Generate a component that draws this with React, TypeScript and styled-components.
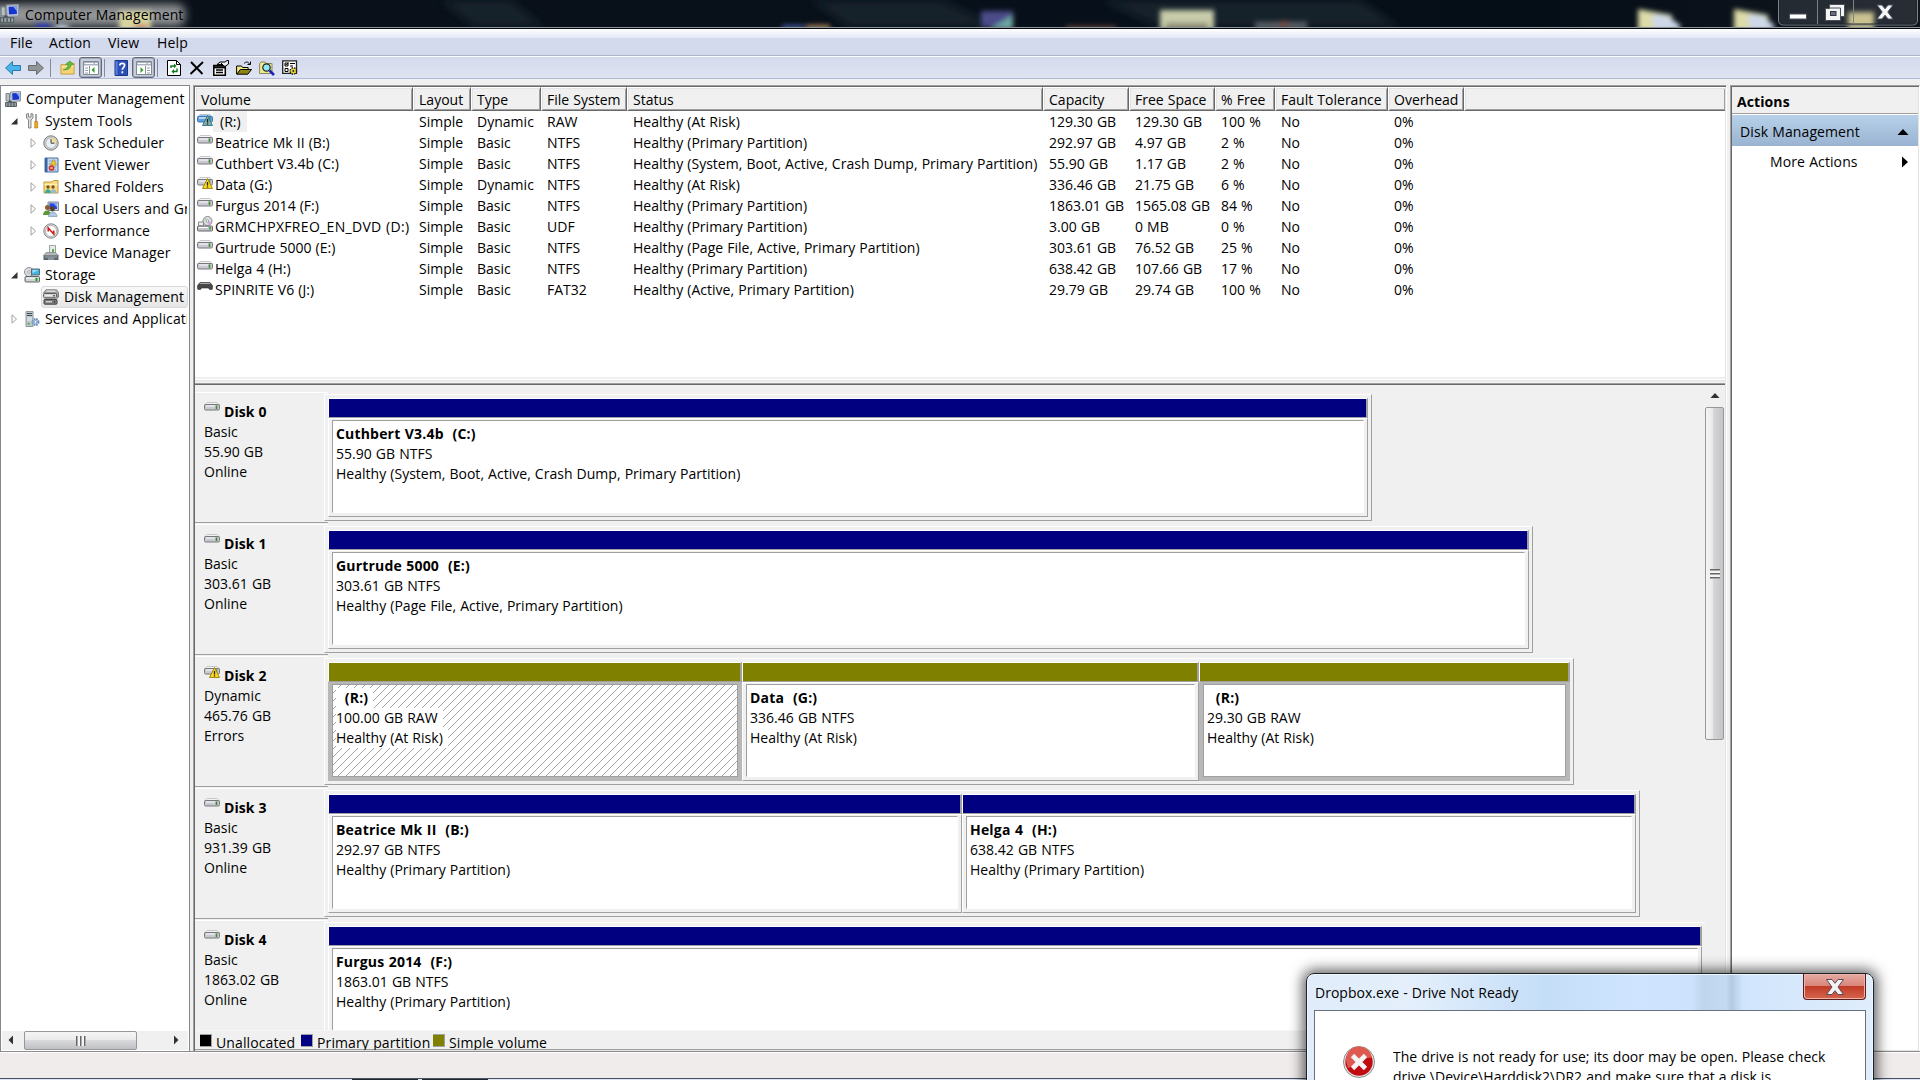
import styled, { createGlobalStyle, css } from 'styled-components';

type TTone = 'primary' | 'simple';

type TPartition = {
  name: string;
  size: string;
  status: string;
  width: number;
  tone: TTone;
  risk?: boolean;
  selected?: boolean;
};

type TDisk = {
  name: string;
  kind: string;
  size: string;
  state: string;
  warn?: boolean;
  parts: TPartition[];
};

const columns = [
  { label: 'Volume', width: 218 },
  { label: 'Layout', width: 58 },
  { label: 'Type', width: 70 },
  { label: 'File System', width: 86 },
  { label: 'Status', width: 416 },
  { label: 'Capacity', width: 86 },
  { label: 'Free Space', width: 86 },
  { label: '% Free', width: 60 },
  { label: 'Fault Tolerance', width: 113 },
  { label: 'Overhead', width: 76 },
];

const volumes = [
  { icon: 'risk', cells: ['(R:)', 'Simple', 'Dynamic', 'RAW', 'Healthy (At Risk)', '129.30 GB', '129.30 GB', '100 %', 'No', '0%'] },
  { icon: 'drive', cells: ['Beatrice Mk II (B:)', 'Simple', 'Basic', 'NTFS', 'Healthy (Primary Partition)', '292.97 GB', '4.97 GB', '2 %', 'No', '0%'] },
  { icon: 'drive', cells: ['Cuthbert V3.4b (C:)', 'Simple', 'Basic', 'NTFS', 'Healthy (System, Boot, Active, Crash Dump, Primary Partition)', '55.90 GB', '1.17 GB', '2 %', 'No', '0%'] },
  { icon: 'warn', cells: ['Data (G:)', 'Simple', 'Dynamic', 'NTFS', 'Healthy (At Risk)', '336.46 GB', '21.75 GB', '6 %', 'No', '0%'] },
  { icon: 'drive', cells: ['Furgus 2014 (F:)', 'Simple', 'Basic', 'NTFS', 'Healthy (Primary Partition)', '1863.01 GB', '1565.08 GB', '84 %', 'No', '0%'] },
  { icon: 'dvd', spread: true, cells: ['GRMCHPXFREO_EN_DVD (D:)', 'Simple', 'Basic', 'UDF', 'Healthy (Primary Partition)', '3.00 GB', '0 MB', '0 %', 'No', '0%'] },
  { icon: 'drive', cells: ['Gurtrude 5000 (E:)', 'Simple', 'Basic', 'NTFS', 'Healthy (Page File, Active, Primary Partition)', '303.61 GB', '76.52 GB', '25 %', 'No', '0%'] },
  { icon: 'drive', cells: ['Helga 4 (H:)', 'Simple', 'Basic', 'NTFS', 'Healthy (Primary Partition)', '638.42 GB', '107.66 GB', '17 %', 'No', '0%'] },
  { icon: 'usb', cells: ['SPINRITE V6 (J:)', 'Simple', 'Basic', 'FAT32', 'Healthy (Active, Primary Partition)', '29.79 GB', '29.74 GB', '100 %', 'No', '0%'] },
];

const disks: TDisk[] = [
  {
    name: 'Disk 0', kind: 'Basic', size: '55.90 GB', state: 'Online',
    parts: [{ name: 'Cuthbert V3.4b  (C:)', size: '55.90 GB NTFS', status: 'Healthy (System, Boot, Active, Crash Dump, Primary Partition)', width: 1040, tone: 'primary' }],
  },
  {
    name: 'Disk 1', kind: 'Basic', size: '303.61 GB', state: 'Online',
    parts: [{ name: 'Gurtrude 5000  (E:)', size: '303.61 GB NTFS', status: 'Healthy (Page File, Active, Primary Partition)', width: 1201, tone: 'primary' }],
  },
  {
    name: 'Disk 2', kind: 'Dynamic', size: '465.76 GB', state: 'Errors', warn: true,
    parts: [
      { name: '  (R:)', size: '100.00 GB RAW', status: 'Healthy (At Risk)', width: 414, tone: 'simple', risk: true, selected: true },
      { name: 'Data  (G:)', size: '336.46 GB NTFS', status: 'Healthy (At Risk)', width: 457, tone: 'simple' },
      { name: '  (R:)', size: '29.30 GB RAW', status: 'Healthy (At Risk)', width: 371, tone: 'simple', risk: true },
    ],
  },
  {
    name: 'Disk 3', kind: 'Basic', size: '931.39 GB', state: 'Online',
    parts: [
      { name: 'Beatrice Mk II  (B:)', size: '292.97 GB NTFS', status: 'Healthy (Primary Partition)', width: 634, tone: 'primary' },
      { name: 'Helga 4  (H:)', size: '638.42 GB NTFS', status: 'Healthy (Primary Partition)', width: 674, tone: 'primary' },
    ],
  },
  {
    name: 'Disk 4', kind: 'Basic', size: '1863.02 GB', state: 'Online',
    parts: [{ name: 'Furgus 2014  (F:)', size: '1863.01 GB NTFS', status: 'Healthy (Primary Partition)', width: 1374, tone: 'primary' }],
  },
];

const tree = [
  { label: 'Computer Management', level: 0, icon: 'computer' },
  { label: 'System Tools', level: 1, icon: 'tools', open: true },
  { label: 'Task Scheduler', level: 2, icon: 'clock', open: false },
  { label: 'Event Viewer', level: 2, icon: 'events', open: false },
  { label: 'Shared Folders', level: 2, icon: 'shared', open: false },
  { label: 'Local Users and Groups', level: 2, icon: 'users', open: false },
  { label: 'Performance', level: 2, icon: 'perf', open: false },
  { label: 'Device Manager', level: 2, icon: 'device' },
  { label: 'Storage', level: 1, icon: 'storage', open: true },
  { label: 'Disk Management', level: 2, icon: 'diskmgmt', selected: true },
  { label: 'Services and Applications', level: 1, icon: 'services', open: false },
];

const Drive = ({ top = '#f4f4f6', body = '#c9c9d2', edge = '#77777c' }) => (
  <>
    <path d="M3 3.5h10l2.5 2.5H.5z" fill={top} stroke="#b4b4b8" strokeWidth=".7" />
    <rect x=".5" y="5.5" width="15" height="5.5" rx="1.3" fill={body} stroke={edge} />
    <path d="M2 7h9" stroke="#ececf4" strokeWidth="1.4" />
    <path d="M12.5 6.5v3.5" stroke="#3c8a2c" strokeWidth="1.6" />
  </>
);

const Warning = ({ fill = '#f8d820', edge = '#a58a10' }) => (
  <>
    <path d="M10.5 4.5l5 10h-10z" fill={fill} stroke={edge} strokeLinejoin="round" />
    <path d="M10.5 8v3.4M10.5 12.3v1.3" stroke="#222" strokeWidth="1.3" />
  </>
);

const glyphs: Record<string, React.ReactNode> = {
  drive: <Drive />,
  warn: (
    <>
      <Drive />
      <Warning />
    </>
  ),
  risk: (
    <>
      <Drive top="#8fc0ee" body="#5a9fdf" edge="#3c78b4" />
      <Warning fill="#7fb0a0" edge="#3d7a96" />
    </>
  ),
  usb: (
    <>
      <path d="M3 3.5h10l2.500 3v3q0 1-1 1h-2l-1-1.500h-7l-1 1.500h-2q-1 0-1-1v-3z" fill="#48484a" stroke="#2e2e30" strokeWidth=".6" />
      <path d="M3 4.500h10" stroke="#a8a8aa" />
    </>
  ),
  dvd: (
    <>
      <circle cx="10.500" cy="5" r="4.500" fill="#dcdce6" stroke="#88888e" />
      <path d="M10.500 5L7 3.500 8.500 1.500z" fill="#a6e0a0" />
      <path d="M10.500 5l3.500 1.500-2 2.500z" fill="#d8a0e0" />
      <circle cx="10.500" cy="5" r="1.200" fill="#fff" stroke="#777" strokeWidth=".6" />
      <path d="M1.500 6h5v4h-5z" fill="#eee" stroke="#888" />
      <rect x=".5" y="10" width="15" height="5" rx="1" fill="#c2c2c8" stroke="#66666a" />
      <path d="M2 11.500h9" stroke="#fff" />
      <path d="M13 11v2.500" stroke="#2f9a20" strokeWidth="1.500" />
    </>
  ),
  computer: (
    <>
      <path d="M5.500 1l10-.500V10l-9.500.500z" fill="#c8cdd8" stroke="#8c94a4" />
      <path d="M7.200 2.300l7-.300v6.500l-6.700.400z" fill="#1635cf" />
      <path d="M11 2.100l3.200-.100v4z" fill="#7fa6f6" />
      <path d="M1 2.500h3.500V10H1z" fill="#b8c0c4" stroke="#7c8488" />
      <path d="M2 12l3-3 4 4-1 1.500H3z" fill="#454f55" />
      <path d="M.5 11.500h11v4H.5z" fill="#9ba5a8" stroke="#59646a" />
      <path d="M3 12v3M6 12v3M9 12v3" stroke="#3f4a50" />
    </>
  ),
  tools: (
    <>
      <path d="M2.500 1v4L4.500 7v8h2.500V7L9 5V1L7 .5v3.500H4.500V.5z" fill="#dcdcdc" stroke="#6f6f6f" strokeWidth=".8" />
      <path d="M12 1v8" stroke="#888" strokeWidth="1.500" />
      <path d="M10.700 8.500h3v6.500h-3z" fill="#f0a820" stroke="#b0780c" strokeWidth=".6" />
    </>
  ),
  clock: (
    <>
      <circle cx="8" cy="8" r="7.200" fill="#d4d4d4" stroke="#7a7a7a" />
      <circle cx="8" cy="8" r="5.300" fill="#e4f0fa" stroke="#999" strokeWidth=".6" />
      <path d="M8 8V2.700A5.300 5.300 0 0113.300 8z" fill="#f4dc9c" />
      <path d="M8 4v4.200h3.500" fill="none" stroke="#44403c" />
    </>
  ),
  events: (
    <>
      <path d="M2 1h13v14H2z" fill="#c4d4ec" stroke="#4870a8" />
      <path d="M2 1h2.500v14H2z" fill="#3c64a4" />
      <path d="M6 4h7M6 7h7M6 10h7M6 13h7" stroke="#7c98c4" strokeWidth=".8" />
      <path d="M10.500 2.500l3 5.500h-6z" fill="#f8cc18" stroke="#a88810" strokeWidth=".6" />
      <circle cx="8.500" cy="11" r="2.800" fill="#d43020" />
      <path d="M7.500 10l2 2M9.500 10l-2 2" stroke="#fff" strokeWidth=".8" />
    </>
  ),
  shared: (
    <>
      <path d="M1 3h8l1.500-1.500H15V14H1z" fill="#f8dc84" stroke="#c09838" />
      <path d="M1.500 5.500h13" stroke="#fff0b8" />
      <circle cx="5" cy="8" r="1.700" fill="#7a5020" />
      <circle cx="10" cy="8" r="1.700" fill="#7a5020" />
      <path d="M2 14c0-5 6-5 6 0z" fill="#3cac98" />
      <path d="M7.500 14c0-5 6-5 6 0z" fill="#98b8d0" />
    </>
  ),
  users: (
    <>
      <path d="M5 1h10.500v8.500H5z" fill="#c4ccdc" stroke="#8088a0" />
      <path d="M6.500 2.300H14V8H6.500z" fill="#2448d8" />
      <path d="M10 2.300h4V6z" fill="#80a8f4" />
      <circle cx="4.500" cy="6.500" r="2.500" fill="#8c5c2c" />
      <circle cx="9.500" cy="8" r="2.400" fill="#5a3c20" />
      <path d="M0 14c0-6 8-6 8 0z" fill="#5c9838" />
      <path d="M5.500 15.500c0-6 8.500-6 8.500 0z" fill="#b0c8e0" stroke="#708cac" strokeWidth=".6" />
    </>
  ),
  perf: (
    <>
      <circle cx="8" cy="8" r="7.200" fill="#d8d8d8" stroke="#868686" />
      <circle cx="8" cy="8" r="5.500" fill="#fff" stroke="#a0a0a0" strokeWidth=".7" />
      <path d="M5.200 8.500V5l5.600 6V7.500" fill="none" stroke="#d01818" strokeWidth="1.500" />
    </>
  ),
  device: (
    <>
      <path d="M6.500.500l6-.200V8h-6z" fill="#e8ecec" stroke="#98a0a0" />
      <path d="M9 4h2v3H9z" fill="#50b040" />
      <path d="M3 7.500h9.500l3 3H.5z" fill="#b0b8bc" stroke="#70787c" strokeWidth=".6" />
      <path d="M.5 10.500h15v4.500H.5z" fill="#5c666c" />
      <path d="M2 12h12" stroke="#a8b0b4" />
      <path d="M5 15v-3h6v3" fill="#88949a" />
    </>
  ),
  storage: (
    <>
      <circle cx="5" cy="5" r="4.500" fill="#dcdce0" stroke="#909094" />
      <circle cx="5" cy="5" r="1.300" fill="#fff" stroke="#808084" strokeWidth=".6" />
      <path d="M7.500 2h8v6h-8z" fill="#46b4e0" stroke="#5a6a74" />
      <path d="M8.500 3h6l-6 3z" fill="#a0e0f8" />
      <rect x="1" y="9.500" width="14.500" height="5.500" rx="1" fill="#d0d4d4" stroke="#5f6668" />
      <path d="M2.500 11.200h8" stroke="#fff" />
      <path d="M12.500 11v3" stroke="#28a020" strokeWidth="2" />
    </>
  ),
  diskmgmt: (
    <>
      <path d="M3 .8h10.500l2 2.700V8L14 9.500V4H.7z" fill="#b4b4b4" stroke="#6c6c6c" strokeWidth=".8" />
      <path d="M3.500 2.200h9" stroke="#eee" />
      <rect x=".5" y="4.500" width="13" height="4" rx=".8" fill="#d4d4d4" stroke="#5c5c5c" />
      <path d="M2 8.500h11l1 2.500H1z" fill="#999" />
      <rect x="1" y="10.500" width="13" height="4.700" rx=".8" fill="#7c7c7c" stroke="#444" />
      <path d="M2.500 6.500h6M3 12.800h6" stroke="#f0f0f0" />
      <path d="M11 6v1.500M11.500 12v1.500" stroke="#333" strokeWidth="1.300" />
    </>
  ),
  services: (
    <>
      <path d="M2 .5h7v15H2z" fill="#bcc8cc" stroke="#8c989c" />
      <path d="M3 2.500h5M3 4.500h5" stroke="#3c4c54" />
      <path d="M3 7h5M3 9h5" stroke="#e8f0f0" />
      <circle cx="11.500" cy="11" r="3" fill="#c0d4ec" stroke="#6c90bc" strokeWidth="2" strokeDasharray="1.600 .8" />
      <circle cx="11.500" cy="11" r="1.300" fill="#fff" stroke="#6c90bc" strokeWidth=".7" />
      <path d="M4 12l1.500 1.500" stroke="#48a038" strokeWidth="1.500" />
    </>
  ),
  back: <path d="M.6 8L7.500 1.500v4h8v5h-8v4z" fill="#49b3ea" stroke="#2a78ac" strokeLinejoin="round" />,
  forward: <path d="M15.400 8L8.500 1.500v4h-8v5h8v4z" fill="#8f9496" stroke="#686c6e" strokeLinejoin="round" />,
  up: (
    <>
      <path d="M1 5h5l1.500-1.500H15V15H1z" fill="#f6d476" stroke="#c39b3c" />
      <path d="M1.500 7h13" stroke="#fdebb0" />
      <path d="M3.500 10.500C7.500 9.500 8.500 7 8.500 4.800H6L10.500 1l4 3.800H12c0 3.500-3 6.200-8.500 5.700z" fill="#5cc03c" stroke="#38882c" strokeWidth=".6" />
    </>
  ),
  paneLeft: (
    <>
      <path d="M.5 1.500h15v13H.5z" fill="#fff" stroke="#808890" />
      <path d="M1 2h14v3.500H1z" fill="#aab4c0" />
      <path d="M1.500 3.500h9M12 3.500h2.500" stroke="#fff" />
      <path d="M6.500 6v8.500" stroke="#8c949c" />
      <path d="M2 8h3M2 10.500h3M2 13h3" stroke="#98a0a8" />
      <path d="M11.500 7v6L8.500 10z" fill="#30a028" />
    </>
  ),
  paneRight: (
    <>
      <path d="M.5 1.500h15v13H.5z" fill="#fff" stroke="#808890" />
      <path d="M1 2h14v3.500H1z" fill="#aab4c0" />
      <path d="M1.500 3.500h9M12 3.500h2.500" stroke="#fff" />
      <path d="M9.500 6v8.500" stroke="#8c949c" />
      <path d="M11 8h3M11 10.500h3M11 13h3" stroke="#98a0a8" />
      <path d="M4.500 7v6l3-3z" fill="#30a028" />
    </>
  ),
  help: (
    <>
      <path d="M2 .5h12.500v15H2z" fill="#2a4fb8" stroke="#1c3684" />
      <path d="M2.500 1h2v14h-2z" fill="#5c80dc" />
      <path d="M6.800 5.500c0-3 4.800-2.800 4.800-.2 0 2-2.300 2-2.300 4.500M9.300 11.300v1.900" fill="none" stroke="#fff" strokeWidth="1.700" />
    </>
  ),
  refresh: (
    <>
      <path d="M1.500.5h9l4 4v11h-13z" fill="#fff" stroke="#000" />
      <path d="M10.500.5v4h4" fill="none" stroke="#000" />
      <path d="M5 8V6h4" fill="none" stroke="#0a7a1c" strokeWidth="1.400" />
      <path d="M8 3.500L10.500 6 8 8.300z" fill="#0a7a1c" />
      <path d="M11 8.500v3H7" fill="none" stroke="#0a7a1c" strokeWidth="1.400" />
      <path d="M8 9L5.500 11.500 8 14z" fill="#0a7a1c" />
    </>
  ),
  remove: <path d="M2 2l11.500 12M14 2L1.500 14" stroke="#000" strokeWidth="1.900" />,
  properties: (
    <>
      <path d="M.8 5.500h11.500v9.800H.8z" fill="#fff" stroke="#000" strokeWidth="1.500" />
      <path d="M1 7.300h11" stroke="#000" strokeWidth="2.200" />
      <path d="M3 10h7M3 12.500h7" stroke="#000" strokeWidth="1.300" />
      <path d="M4 4.500l3-2.500h5l2-1.500h1.500v3.500L12 6.500 9.500 5z" fill="#ececec" stroke="#000" />
      <path d="M6 4.500h4M8 3l2 2" stroke="#000" />
    </>
  ),
  open: (
    <>
      <path d="M.6 14V6h5l1 1.500h5.500v2" fill="#f4ec80" stroke="#000" />
      <path d="M.8 14.200l3.500-4.700h11.200l-3.700 4.700z" fill="#8c8618" stroke="#000" />
      <path d="M8 3.500c2-2 4-2 5.500.5M14.500 1.500v3h-3" fill="none" stroke="#000" />
    </>
  ),
  search: (
    <>
      <path d="M.6 13.500V3.500L2 2h4l1.500 1.500H13v10z" fill="#f0e890" stroke="#8a8460" />
      <circle cx="7.500" cy="7.500" r="3.700" fill="#8ee8f8" stroke="#222" strokeWidth="1.200" />
      <path d="M10.500 10.500l4.500 4.500" stroke="#1824b8" strokeWidth="2.500" />
    </>
  ),
  settings: (
    <>
      <path d="M.7.800h13.800v12.500H.7z" fill="#fff" stroke="#222" strokeWidth="1.300" />
      <path d="M3 3h3v3H3zM3 8.500h3v3H3zM8 3.500h5M8 6h3" fill="none" stroke="#000" />
      <path d="M3.500 4l1 1 2-2.500" fill="none" stroke="#000" />
      <circle cx="11.300" cy="11" r="3" fill="#e8d840" stroke="#222" strokeWidth="1.800" strokeDasharray="1.500 .9" />
      <circle cx="11.300" cy="11" r="2.500" fill="#e8d430" />
      <circle cx="11.300" cy="11" r=".9" fill="#222" />
    </>
  ),
};

const Icon = ({ name, size = 16 }: { name: string; size?: number }) => (
  <IconSvg $size={size} viewBox="0 0 16 16">
    {glyphs[name]}
  </IconSvg>
);

const Backdrop = () => (
  <BackdropSvg viewBox="0 0 1920 27" preserveAspectRatio="none">
    <defs>
      <filter id="soft" x="-20%" y="-20%" width="140%" height="140%">
        <feGaussianBlur stdDeviation="2.5" />
      </filter>
      <filter id="glow" x="-20%" y="-60%" width="140%" height="220%">
        <feGaussianBlur stdDeviation="5" />
      </filter>
    </defs>
    <path d="M440 0h70l35 27h-70zM810 0h130l60 27H850zM1100 0h260l40 27h-240z" fill="#18212b" filter="url(#glow)" />
    <rect x="-10" y="4" width="195" height="22" rx="8" fill="#a2a4a6" opacity=".9" filter="url(#glow)" />
    <g filter="url(#soft)">
      <ellipse cx="43" cy="27" rx="9" ry="3" fill="#2638c8" />
      <ellipse cx="62" cy="28" rx="8" ry="3" fill="#d8e4f4" />
      <rect x="119" y="11" width="32" height="20" fill="#d8d4a0" />
      <ellipse cx="141" cy="27" rx="7" ry="2" fill="#c04838" />
      <rect x="782" y="25" width="22" height="5" fill="#3c58a0" />
      <rect x="806" y="25" width="24" height="5" fill="#b08858" />
      <rect x="981" y="11" width="32" height="16" fill="#4c4c88" />
      <path d="M990 29l23-14v14z" fill="#70a8a4" />
      <rect x="1066" y="26" width="50" height="4" fill="#6a4638" />
      <rect x="1160" y="10" width="54" height="20" fill="#c8ccaa" />
      <rect x="1166" y="23" width="42" height="6" fill="#8a8870" />
      <rect x="1255" y="22" width="52" height="7" fill="#5c6068" />
      <rect x="1280" y="21" width="8" height="7" fill="#7a4c40" />
      <path d="M1638 9l34 6v16h-34z" fill="#dcdca8" />
      <path d="M1652 15h14l14 10v5h-26z" fill="#ccd8e8" />
      <path d="M1734 9l34 6v16h-34z" fill="#dcdca8" />
      <path d="M1748 15h14l12 10v5h-24z" fill="#ccd8e8" />
      <rect x="1848" y="12" width="26" height="18" fill="#c4bc84" />
    </g>
  </BackdropSvg>
);

const Caption = () => (
  <CaptionSvg viewBox="0 0 140 26">
    <path d="M.5 0v20q0 5 5 5h129q5 0 5-5V0" fill="rgba(255,255,255,.1)" stroke="#7b8288" />
    <path d="M1.500 0v19q0 5 5 5h127q5 0 5-5V0" fill="none" stroke="#20262c" />
    <path d="M39.500 0v24M75.500 0v24" stroke="#7b8288" />
    <rect x="11.500" y="14" width="17" height="5" fill="#fff" stroke="#4a4f5c" />
    <path d="M51.500 4.500h15v12h-4v4h-15v-12h4z" fill="#f4f4f4" stroke="#4a4f5c" />
    <path d="M51.500 8h11v9" fill="none" stroke="#4a4f5c" />
    <rect x="52.500" y="11.500" width="5.500" height="4" fill="#66707c" stroke="#333944" />
    <path d="M99 5h5l3 3.800L110 5h5l-5.200 7 5.200 7h-5l-3-3.800L104 19h-5l5.200-7z" fill="#f6f6f6" stroke="#4a4f5c" />
  </CaptionSvg>
);

const Partition = ({ part }: { part: TPartition }) => (
  <PartitionBox $width={part.width}>
    <Band $tone={part.tone} />
    <PartFrame $risk={part.risk}>
      <PartBody $risk={part.risk} $selected={part.selected}>
        <PartLine $bold>{part.name}</PartLine>
        <PartLine>{part.size}</PartLine>
        <PartLine>{part.status}</PartLine>
      </PartBody>
    </PartFrame>
  </PartitionBox>
);

const App: React.FC = () => {
  return (
    <Screen>
      <GlobalStyle />
      <TitleBar>
        <Backdrop />
        <Icon name="computer" size={19} />
        <Title>Computer Management</Title>
        <Caption />
      </TitleBar>
      <MenuBar>
        <MenuItem $width={39}>File</MenuItem>
        <MenuItem $width={59}>Action</MenuItem>
        <MenuItem $width={49}>View</MenuItem>
        <MenuItem $width={50}>Help</MenuItem>
      </MenuBar>
      <ToolBar>
        <Icon name="back" />
        <ToolGap $w={7} />
        <Icon name="forward" />
        <Divider $left={6} $right={9} />
        <Icon name="up" size={15} />
        <ToolGap $w={4} />
        <Pressed>
          <Icon name="paneLeft" />
        </Pressed>
        <Divider $left={2} $right={8} />
        <Icon name="help" />
        <ToolGap $w={3} />
        <Pressed>
          <Icon name="paneRight" />
        </Pressed>
        <Divider $left={2} $right={8} />
        <Icon name="refresh" />
        <ToolGap $w={7} />
        <Icon name="remove" />
        <ToolGap $w={8} />
        <Icon name="properties" />
        <ToolGap $w={7} />
        <Icon name="open" />
        <ToolGap $w={7} />
        <Icon name="search" />
        <ToolGap $w={7} />
        <Icon name="settings" />
      </ToolBar>

      <Main>
        <TreePane>
          <TreeList>
            {tree.map((node) => (
              <TreeRow key={node.label} $level={node.level}>
                {node.level > 0 && (
                  <Twisty viewBox="0 0 8 12">
                    {node.open === true && <path d="M6.500 3v6.500H0z" fill="#333" />}
                    {node.open === false && <path d="M1 1.800l4.500 4.200L1 10.200z" fill="#fff" stroke="#a0a0a0" />}
                  </Twisty>
                )}
                <TreeLabel $selected={node.selected}>
                  <Icon name={node.icon} />
                  <span>{node.label}</span>
                </TreeLabel>
              </TreeRow>
            ))}
          </TreeList>
          <HScroll>
            <Arrow viewBox="0 0 22 19">
              <path d="M11 4.500v9L6.500 9z" fill="#333" />
            </Arrow>
            <HThumb>
              <Grip />
            </HThumb>
            <Arrow viewBox="0 0 22 19">
              <path d="M8 4.500v9L12.500 9z" fill="#333" />
            </Arrow>
          </HScroll>
        </TreePane>

        <CenterPane>
          <Table>
            <HeadRow>
              {columns.map((col) => (
                <HeadCell key={col.label} $width={col.width}>
                  {col.label}
                </HeadCell>
              ))}
              <HeadFill />
            </HeadRow>
            {volumes.map((vol, row) => (
              <VolumeRow key={vol.cells[0]}>
                {vol.cells.map((cell, i) =>
                  i === 0 ? (
                    <VolumeName key={i} $width={columns[i].width}>
                      <Icon name={vol.icon} />
                      <NameText $selected={row === 0} $spread={vol.spread}>
                        {cell}
                      </NameText>
                    </VolumeName>
                  ) : (
                    <Cell key={i} $width={columns[i].width}>
                      {cell}
                    </Cell>
                  )
                )}
              </VolumeRow>
            ))}
          </Table>
          <Splitter />
          <Graphical>
            <DiskList>
              {disks.map((disk) => (
                <DiskRow key={disk.name}>
                  <DiskLabel>
                    <DiskName>
                      <Icon name={disk.warn ? 'warn' : 'drive'} />
                      {disk.name}
                    </DiskName>
                    <DiskLine>{disk.kind}</DiskLine>
                    <DiskLine>{disk.size}</DiskLine>
                    <DiskLine>{disk.state}</DiskLine>
                  </DiskLabel>
                  <DiskGraph>
                    {disk.parts.map((part, i) => (
                      <Partition key={i} part={part} />
                    ))}
                  </DiskGraph>
                </DiskRow>
              ))}
            </DiskList>
            <VScroll>
              <UpArrow viewBox="0 0 10 6">
                <path d="M5 0l4.500 5H.5z" fill="#333" />
              </UpArrow>
              <VThumb>
                <Grip $vertical />
              </VThumb>
            </VScroll>
          </Graphical>
          <Legend>
            <Swatch $color="#000" />
            <LegendText $width={89}>Unallocated</LegendText>
            <Swatch $color="#000080" />
            <LegendText $width={120}>Primary partition</LegendText>
            <Swatch $color="#808000" />
            <LegendText $width={110}>Simple volume</LegendText>
          </Legend>
        </CenterPane>

        <ActionsPane>
          <ActionsHead>Actions</ActionsHead>
          <ActionsGroup>
            Disk Management
            <ActionArrow viewBox="0 0 12 12">
              <path d="M6 3l5.500 6H.5z" />
            </ActionArrow>
          </ActionsGroup>
          <ActionItem>
            More Actions
            <ActionArrow viewBox="0 0 12 12">
              <path d="M4 .5v11L10 6z" />
            </ActionArrow>
          </ActionItem>
        </ActionsPane>
      </Main>
      <StatusBar />
      <TaskEdge>
        <TaskItem />
        <TaskItem />
      </TaskEdge>

      <Dialog>
        <DialogTitle>
          <span>Dropbox.exe - Drive Not Ready</span>
          <CloseButton>
            <svg width="20" height="18" viewBox="0 0 20 18">
              <path d="M1.500 1.500h5.500L10 5.300l3-3.800h5.500L13 9l5.500 7.500H13L10 12.700l-3 3.800H1.500L7 9z" fill="#f2f2f2" stroke="#5a4a5c" />
            </svg>
          </CloseButton>
        </DialogTitle>
        <DialogBody>
          <svg width="32" height="32" viewBox="0 0 32 32">
            <circle cx="16" cy="16" r="15.500" fill="#e8e8e8" stroke="#8c8c8c" />
            <circle cx="16" cy="16" r="13.700" fill="#c00c10" />
            <path d="M3 15a13 13 0 0126-3C21 10 12 20 5 22z" fill="#de5a50" />
            <path d="M9.500 9.500l13 13M22.500 9.500l-13 13" stroke="#f4f4f4" strokeWidth="4.600" />
          </svg>
          <DialogText>
            The drive is not ready for use; its door may be open. Please check
            <br />
            drive \Device\Harddisk2\DR2 and make sure that a disk is
          </DialogText>
        </DialogBody>
      </Dialog>
    </Screen>
  );
};

export default App;

const GlobalStyle = createGlobalStyle`
  * {
    box-sizing: border-box;
  }

  body {
    margin: 0;
    overflow: hidden;
    background: #f0f0f0;
  }
`;

const IconSvg = styled.svg<{ $size: number }>`
  position: relative;
  flex: none;
  width: ${({ $size }) => $size}px;
  height: ${({ $size }) => $size}px;
`;

const Screen = styled.div`
  position: relative;
  width: 1920px;
  height: 1080px;
  overflow: hidden;
  display: flex;
  flex-direction: column;
  background: #f0f0f0;
  color: #000;
  font-family: 'Open Sans', 'Noto Sans', sans-serif;
  font-size: 14px;
  letter-spacing: 0.02px;
  word-spacing: 0.4px;
  white-space: pre;
`;

const TitleBar = styled.div`
  position: relative;
  flex: none;
  display: flex;
  align-items: center;
  height: 29px;
  padding: 0 2px 2px 0;
  overflow: hidden;
  background: linear-gradient(90deg, #0a1018, #07101a 60%, #050d16 80%, #10161e);
  border-bottom: 1px solid #05080c;
  box-shadow: inset 0 -1px #8e969c;
`;

const BackdropSvg = styled.svg`
  position: absolute;
  left: 0;
  top: 0;
  width: 1920px;
  height: 27px;
`;

const Title = styled.span`
  position: relative;
  flex: 1;
  padding: 3px 0 0 6px;
  line-height: 20px;
  letter-spacing: 0.1px;
`;

const CaptionSvg = styled.svg`
  position: relative;
  align-self: flex-start;
  width: 140px;
  height: 26px;
`;

const MenuBar = styled.div`
  flex: none;
  display: flex;
  height: 28px;
  padding-left: 10px;
  line-height: 27px;
  letter-spacing: 0.15px;
  background: linear-gradient(#fff, #e2e7f4 9px, #d4daed 9px);
  border-bottom: 1px solid #fafbfe;
  box-shadow: inset 0 -1px #b0b3c2;
`;

const MenuItem = styled.div<{ $width: number }>`
  width: ${({ $width }) => $width}px;
`;

const ToolBar = styled.div`
  flex: none;
  display: flex;
  align-items: center;
  height: 22px;
  padding-left: 5px;
  background: linear-gradient(#d4daec, #dfe4f3);
  border-bottom: 1px solid #b2b8d6;
`;

const ToolGap = styled.div<{ $w: number }>`
  width: ${({ $w }) => $w}px;
`;

const Divider = styled.div<{ $left: number; $right: number }>`
  width: 1px;
  height: 18px;
  margin: 0 ${({ $right }) => $right}px 0 ${({ $left }) => $left}px;
  background: #858b9a;
`;

const Pressed = styled.div`
  display: flex;
  align-items: center;
  justify-content: center;
  width: 23px;
  height: 21px;
  border: 1px solid #62687a;
  border-radius: 3px;
  background: #c8cddd;
  box-shadow: inset 0 0 0 1px #a4abbc;
`;

const Main = styled.div`
  flex: none;
  display: flex;
  gap: 3px;
  height: 973px;
  padding-top: 6px;
`;

const TreePane = styled.div`
  display: flex;
  flex-direction: column;
  width: 190px;
  padding: 2px 1px 1px;
  border: 1px solid #828790;
  background: #fff;
`;

const TreeList = styled.div`
  flex: 1;
  overflow: hidden;
`;

const TreeRow = styled.div<{ $level: number }>`
  display: flex;
  align-items: center;
  height: 22px;
  padding-left: ${({ $level }) => [1, 9, 28][$level]}px;
`;

const Twisty = styled.svg`
  flex: none;
  width: 8px;
  height: 12px;
  margin-right: 3px;
`;

const TreeLabel = styled.div<{ $selected?: boolean }>`
  flex: 1;
  display: flex;
  align-items: center;
  gap: 5px;
  height: 22px;
  padding-left: 1px;
  line-height: 20px;
  letter-spacing: 0.11px;
  overflow: hidden;
  border: 1px solid transparent;
  border-radius: 3px;

  ${({ $selected }) =>
    $selected &&
    css`
      border-color: #d9d9d9;
      background: linear-gradient(#f8f8f8, #e6e6e6);
    `}
`;

const HScroll = styled.div`
  display: flex;
  height: 19px;
  background: #f0f0f0;
`;

const Arrow = styled.svg`
  flex: none;
  width: 22px;
  height: 19px;

  &:last-child {
    margin-left: 29px;
  }
`;

const HThumb = styled.div`
  display: flex;
  align-items: center;
  justify-content: center;
  width: 113px;
  border: 1px solid #979797;
  border-radius: 2px;
  background: linear-gradient(#f5f5f5, #e9e9eb 50%, #d9dadc 50%, #c0c0c4);
`;

const Grip = styled.div<{ $vertical?: boolean }>`
  width: 10px;
  height: 10px;
  background: repeating-linear-gradient(
    ${({ $vertical }) => ($vertical ? '180deg' : '90deg')},
    #666 0 1px,
    #aaa 1px 2px,
    #f4f4f4 2px 4px
  );
`;

const CenterPane = styled.div`
  display: flex;
  flex-direction: column;
  width: 1534px;
  border: 1px solid;
  border-color: #a0a0a0 #fff #fff #a0a0a0;
  box-shadow: inset 1px 1px #696969, inset -1px -1px #e3e3e3;
  padding: 1px;
`;

const Table = styled.div`
  flex: none;
  height: 290px;
  background: #fff;
`;

const HeadRow = styled.div`
  display: flex;
  height: 24px;
`;

const raised = css`
  background: #f0f0f0;
  border: 1px solid;
  border-color: #fff #696969 #696969 #fff;
  box-shadow: inset 1px 1px #e3e3e3, inset -1px -1px #a0a0a0;
`;

const HeadCell = styled.div<{ $width: number }>`
  ${raised}
  flex: none;
  width: ${({ $width }) => $width}px;
  padding-left: 5px;
  line-height: 23px;
`;

const HeadFill = styled.div`
  ${raised}
  flex: 1;
  border-right: none;
`;

const VolumeRow = styled.div`
  display: flex;
  height: 21px;
  line-height: 21px;
`;

const Cell = styled.div<{ $width: number }>`
  flex: none;
  width: ${({ $width }) => $width}px;
  padding-left: 6px;
`;

const VolumeName = styled.div<{ $width: number }>`
  flex: none;
  display: flex;
  width: ${({ $width }) => $width}px;
  padding-left: 2px;
`;

const NameText = styled.span<{ $selected: boolean; $spread?: boolean }>`
  padding-left: 2px;
  letter-spacing: ${({ $spread }) => ($spread ? '0.32px' : '0.02px')};

  ${({ $selected }) =>
    $selected &&
    css`
      padding: 0 6px 0 7px;
      background: #f0f0f0;
    `}
`;

const Splitter = styled.div`
  flex: none;
  height: 8px;
  border-top: 2px solid #f0f0f0;
  border-bottom: 1px solid #696969;
  background: #f0f0f0;
  box-shadow: inset 0 1px #fff, inset 0 2px #e3e3e3, inset 0 -1px #a0a0a0;
`;

const Graphical = styled.div`
  flex: 1;
  display: flex;
  min-height: 0;
  background: #f0f0f0;
`;

const DiskList = styled.div`
  width: 1510px;
  padding-top: 7px;
  overflow: hidden;
`;

const DiskRow = styled.div`
  display: flex;
  height: 132px;
`;

const DiskLabel = styled.div`
  flex: none;
  width: 133px;
  height: 131px;
  padding: 9px 0 0 9px;
  line-height: 20px;
  border-top: 1px solid #fff;
  border-bottom: 1px solid #a0a0a0;
`;

const DiskName = styled.div`
  display: flex;
  gap: 4px;
  font-weight: 700;

  svg {
    margin-top: -3px;
  }
`;

const DiskLine = styled.div`
  line-height: 20px;
`;

const DiskGraph = styled.div`
  flex: none;
  display: flex;
  height: 127px;
  margin: 2px 0 0 -4px;
  padding: 3px;
  border: 1px solid;
  border-color: #fff #a0a0a0 #a0a0a0 #fff;
  background: #f0f0f0;
`;

const PartitionBox = styled.div<{ $width: number }>`
  width: ${({ $width }) => $width}px;
`;

const Band = styled.div<{ $tone: TTone }>`
  height: 20px;
  border: 1px solid;
  border-color: #fff #a0a0a0 #a0a0a0 #fff;
  border-right-width: 2px;
  background: ${({ $tone }) => ($tone === 'primary' ? '#000080' : '#808000')};
`;

const PartFrame = styled.div<{ $risk?: boolean }>`
  height: 99px;
  padding: 1px 3px 3px;
  border: 1px solid;
  border-color: ${({ $risk }) => ($risk ? '#b8b8b8' : '#fff #a0a0a0 #a0a0a0 #fff')};
  background: ${({ $risk }) => ($risk ? '#b8b8b8' : '#f0f0f0')};
`;

const PartBody = styled.div<{ $risk?: boolean; $selected?: boolean }>`
  height: 93px;
  padding: 3px 0 0 3px;
  border: 1px solid;
  border-color: ${({ $risk }) => ($risk ? '#a0a0a0' : '#a0a0a0 #fff #fff #a0a0a0')};
  background: #fff;

  ${({ $selected }) =>
    $selected &&
    css`
      background: linear-gradient(135deg, #fff 46%, #a4a4a4 46% 54%, #fff 54%) 0 0 / 8px 8px;
    `}
`;

const PartLine = styled.div<{ $bold?: boolean }>`
  width: max-content;
  height: 20px;
  padding-right: 5px;
  line-height: 20px;
  background: #fff;

  ${({ $bold }) =>
    $bold &&
    css`
      font-weight: 700;
      letter-spacing: 0.18px;
      word-spacing: 0.6px;
    `}
`;

const VScroll = styled.div`
  display: flex;
  flex-direction: column;
  align-items: center;
  width: 20px;
  padding-right: 1px;
  background: #f0f0f0;
`;

const UpArrow = styled.svg`
  width: 10px;
  height: 6px;
  margin: 8px 0;
`;

const VThumb = styled.div`
  display: flex;
  align-items: center;
  justify-content: center;
  width: 19px;
  height: 333px;
  border: 1px solid #979797;
  border-radius: 2px;
  background: linear-gradient(90deg, #f5f5f5, #e9e9eb 40%, #d6d7d9 40%, #c4c4c8);
`;

const Legend = styled.div`
  flex: none;
  display: flex;
  height: 20px;
  padding: 3px 0 0 5px;
  overflow: hidden;
  background: #f0f0f0;
  border-top: 1px solid #f6f6f6;
  box-shadow: inset 0 -1px #a0a0a0;
`;

const Swatch = styled.div<{ $color: string }>`
  width: 12px;
  height: 13px;
  border: 1px solid #a0a0a0;
  border-left: none;
  background: ${({ $color }) => $color};
`;

const LegendText = styled.div<{ $width: number }>`
  width: ${({ $width }) => $width}px;
  padding-left: 4px;
  line-height: 18px;
  letter-spacing: 0.12px;
`;

const ActionsPane = styled.div`
  width: 190px;
  padding: 1px;
  border: 1px solid;
  border-color: #a0a0a0 #fff #fff #a0a0a0;
  background: #fff;
  box-shadow: inset 1px 1px #696969, inset -1px -1px #e3e3e3;
`;

const ActionsHead = styled.div`
  height: 28px;
  padding-left: 5px;
  line-height: 29px;
  font-weight: 700;
  letter-spacing: 0.1px;
  background: #f0f0f0;
  border-bottom: 1px solid #fff;
  box-shadow: inset 0 -1px #a0a0a0;
`;

const ActionsGroup = styled.div`
  display: flex;
  align-items: center;
  justify-content: space-between;
  height: 31px;
  padding: 2px 9px 0 8px;
  letter-spacing: 0.1px;
  background: linear-gradient(#b8d1ea, #99b3d1);
`;

const ActionItem = styled.div`
  display: flex;
  align-items: center;
  justify-content: space-between;
  height: 31px;
  padding: 0 8px 0 38px;
  letter-spacing: 0.1px;
`;

const ActionArrow = styled.svg`
  width: 12px;
  height: 12px;
`;

const StatusBar = styled.div`
  flex: none;
  height: 26px;
  background: #f0eceb;
  border-top: 1px solid #fff;
  box-shadow: 0 -1px #8c8c8c;
`;

const TaskEdge = styled.div`
  flex: 1;
  display: flex;
  gap: 4px;
  padding-left: 352px;
  border-top: 1px solid #465264;
  background: #dce6f2;
`;

const TaskItem = styled.div`
  width: 66px;
  background: #23282e;
`;

const Dialog = styled.div`
  position: absolute;
  left: 1306px;
  top: 973px;
  width: 568px;
  height: 140px;
  padding: 0 7px;
  border: 1px solid #1c222a;
  border-radius: 8px 8px 0 0;
  background: linear-gradient(
    90deg,
    #e0ecfa,
    #e4effb 18%,
    #c5def8 42%,
    #cfe5ff 58%,
    #cde3fd 68%,
    #bfd5ee 70%,
    #c4daf3 74%,
    #b4cae4 75%,
    #d0e5fc 77%,
    #e0edfb
  );
  box-shadow: inset 0 0 0 1px #f0f8ff, 0 0 14px 3px rgba(0, 0, 0, 0.65);
`;

const DialogTitle = styled.div`
  display: flex;
  justify-content: space-between;
  height: 36px;
  padding-left: 1px;
  line-height: 38px;
`;

const CloseButton = styled.div`
  display: flex;
  align-items: center;
  justify-content: center;
  width: 63px;
  height: 26px;
  border: 1px solid #5c1c1c;
  border-top: none;
  border-radius: 0 0 4px 4px;
  background: linear-gradient(#e6aca4, #d88478 48%, #c23c28 50%, #d4644c);
  box-shadow: inset 0 0 0 1px #eeb4aa;
`;

const DialogBody = styled.div`
  display: flex;
  gap: 18px;
  height: 110px;
  padding: 35px 0 0 28px;
  border: 1px solid #66707e;
  background: #fff;
`;

const DialogText = styled.div`
  margin-top: 1px;
  line-height: 20px;
`;
